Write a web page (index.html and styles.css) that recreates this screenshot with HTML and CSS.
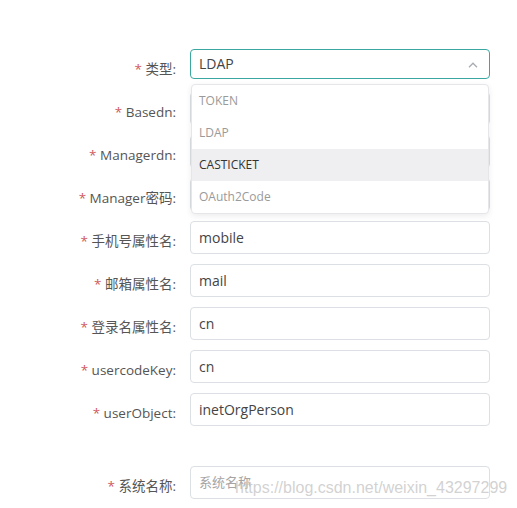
FILE: index.html
```html
<!DOCTYPE html>
<html lang="zh-CN">
<head>
<meta charset="utf-8">
<link rel="stylesheet" href="styles.css">
</head>
<body>
<div class="page">
  <form class="form">
    <div class="row">
      <label class="label"><span class="req">*</span> 类型:</label>
      <div class="select">
        <span class="select-value">LDAP</span>
        <svg class="chevron" width="10" height="6" viewBox="0 0 10 6"><path d="M1 5.2 L5 1.2 L9 5.2" fill="none" stroke="#a8acb3" stroke-width="1.3"/></svg>
      </div>
    </div>
    <div class="row">
      <label class="label"><span class="req">*</span> Basedn:</label>
      <div class="input"></div>
    </div>
    <div class="row">
      <label class="label"><span class="req">*</span> Managerdn:</label>
      <div class="input"></div>
    </div>
    <div class="row">
      <label class="label"><span class="req">*</span> Manager密码:</label>
      <div class="input"></div>
    </div>
    <div class="row">
      <label class="label"><span class="req">*</span> 手机号属性名:</label>
      <div class="input">mobile</div>
    </div>
    <div class="row">
      <label class="label"><span class="req">*</span> 邮箱属性名:</label>
      <div class="input">mail</div>
    </div>
    <div class="row">
      <label class="label"><span class="req">*</span> 登录名属性名:</label>
      <div class="input">cn</div>
    </div>
    <div class="row">
      <label class="label"><span class="req">*</span> usercodeKey:</label>
      <div class="input">cn</div>
    </div>
    <div class="row row-gap">
      <label class="label"><span class="req">*</span> userObject:</label>
      <div class="input">inetOrgPerson</div>
    </div>
    <div class="row">
      <label class="label"><span class="req">*</span> 系统名称:</label>
      <div class="input placeholder">系统名称</div>
    </div>
  </form>

  <ul class="dropdown">
    <li class="option">TOKEN</li>
    <li class="option">LDAP</li>
    <li class="option hover">CASTICKET</li>
    <li class="option">OAuth2Code</li>
  </ul>

  <div class="watermark">https://blog.csdn.net/weixin_43297299</div>
</div>
</body>
</html>
```

FILE: styles.css
```css
* { box-sizing: border-box; }
html, body { margin: 0; padding: 0; background: #ffffff; }
body {
  font-family: "Open Sans", "Noto Sans CJK SC", sans-serif;
  color: #555555;
}
.page {
  position: relative;
  width: 517px;
  height: 508px;
  overflow: hidden;
}
.form {
  padding-top: 49px;
  display: flex;
  flex-direction: column;
  gap: 10px;
}
.row {
  display: flex;
  align-items: flex-start;
  gap: 14px;
  height: 33px;
}
.row-gap { margin-bottom: 30px; }
.label {
  width: 176px;
  text-align: right;
  font-size: 13.5px;
  line-height: 33px;
  padding-top: 4px;
  color: #555555;
  white-space: nowrap;
}
.req { color: #cf5a5e; }
.input, .select {
  width: 300px;
  height: 33px;
  border: 1px solid #dcdfe3;
  border-radius: 4px;
  padding: 0 8px;
  font-size: 14px;
  line-height: 31px;
  color: #444444;
  background: #fff;
}
.placeholder { color: #a5a5a5; font-size: 13px; }
.select {
  height: 30px;
  line-height: 28px;
  border-color: #3ba7a1;
  display: flex;
  align-items: center;
  justify-content: space-between;
  padding-right: 11px;
}
.chevron { display: block; margin-top: 2px; }
.dropdown {
  position: absolute;
  left: 191px;
  top: 84px;
  width: 298px;
  margin: 0;
  padding: 0;
  list-style: none;
  border: 1px solid #e4e6ea;
  border-radius: 4px;
  background: #fff;
  box-shadow: 0 2px 6px rgba(0, 0, 0, 0.08);
  overflow: hidden;
}
.option {
  height: 32px;
  line-height: 32px;
  padding-left: 7px;
  font-size: 12px;
  color: #9a9a9a;
}
.option.hover {
  background: #efeff1;
  color: #333333;
}
.watermark {
  position: absolute;
  left: 235px;
  top: 479px;
  font-family: "Liberation Sans", Arial, sans-serif;
  font-size: 16px;
  color: rgba(195, 195, 195, 0.75);
  white-space: nowrap;
  pointer-events: none;
}
```
